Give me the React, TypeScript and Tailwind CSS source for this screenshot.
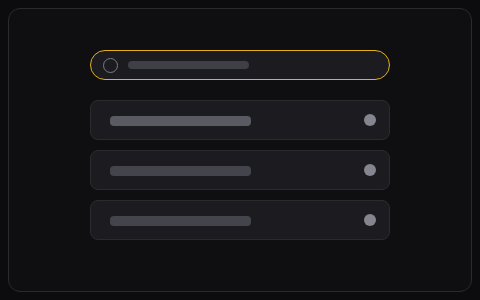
import React from 'react';

const rows = [
  { bar: 'bg-[#5a5a62]' },
  { bar: 'bg-[#44444c]' },
  { bar: 'bg-[#44444c]' },
];

const App: React.FC = () => {
  return (
    <div className="w-[480px] h-[300px] bg-[#0c0c0e] p-2 font-['Inter',sans-serif]">
      <div className="h-full rounded-xl border border-[#2a2a2e] bg-[#0f0f11] pt-[41px] px-[81px]">
        {/* search pill */}
        <div className="h-[30px] rounded-full border border-[#e3b020] bg-[#1c1c20] flex items-center pl-3 gap-[10px]">
          <div className="w-[15px] h-[15px] rounded-full border-[1.5px] border-[#7a7a83]" />
          <div className="w-[121px] h-2 rounded-full bg-[#3f3f46]" />
        </div>

        <div className="mt-5 flex flex-col gap-[10px]">
          {rows.map((r, i) => (
            <div
              key={i}
              className="h-10 rounded-lg border border-[#2a2a2f] bg-[#1c1c20] flex items-center justify-between pl-[19px] pr-[13px]"
            >
              <div className={`w-[141px] h-[10px] mt-[2px] rounded ${r.bar}`} />
              <div className="w-3 h-3 rounded-full bg-[#85858f]" />
            </div>
          ))}
        </div>
      </div>
    </div>
  );
};

export default App;
